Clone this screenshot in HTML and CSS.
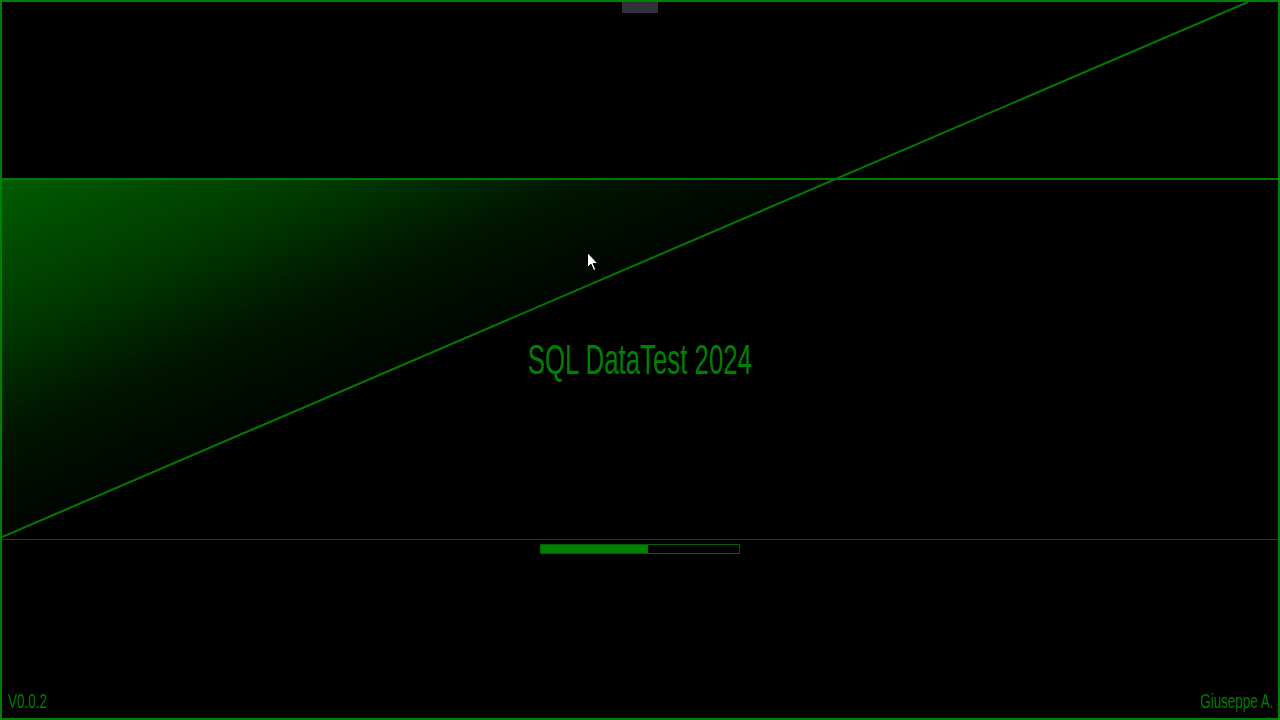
FILE: index.html
```html
<!DOCTYPE html>
<html lang="en">
<head>
<meta charset="utf-8">
<title>SQL DataTest 2024</title>
<link rel="stylesheet" href="styles.css">
</head>
<body>
<div class="screen">
  <div class="tab"></div>
  <svg class="overlay" width="1276" height="716" viewBox="0 0 1276 716" xmlns="http://www.w3.org/2000/svg">
    <defs>
      <linearGradient id="glow" x1="0" y1="0" x2="1" y2="1">
        <stop offset="0" stop-color="#005c00"/>
        <stop offset="0.2" stop-color="#003a00"/>
        <stop offset="0.36" stop-color="#001500"/>
        <stop offset="0.48" stop-color="#000700"/>
        <stop offset="0.56" stop-color="#000000"/>
      </linearGradient>
    </defs>
    <polygon points="0,178 831,178 0,535" fill="url(#glow)"/>
    <line x1="0" y1="535" x2="1246" y2="0" stroke="#007a00" stroke-width="2"/>
  </svg>
  <div class="top"></div>
  <div class="band">
    <h1 class="title"><span>SQL DataTest 2024</span></h1>
  </div>
  <div class="bottom">
    <div class="progress"><div class="fill" style="width:54%"></div></div>
    <div class="footer">
      <span class="ver">V0.0.2</span>
      <span class="author">Giuseppe A.</span>
    </div>
  </div>
  <svg class="cursor" width="13" height="21" viewBox="0 0 13 21" xmlns="http://www.w3.org/2000/svg">
    <path d="M0.5 0.5 L0.5 15.5 L4 12.2 L6.6 18.5 L8.8 17.6 L6.2 11.5 L10.8 11.5 Z" fill="#ffffff" stroke="#000000" stroke-width="1"/>
  </svg>
</div>
</body>
</html>
```
FILE: styles.css
```css
html, body {
  margin: 0;
  padding: 0;
  background: #000;
}
.screen {
  position: relative;
  width: 1280px;
  height: 720px;
  box-sizing: border-box;
  border: 2px solid #008000;
  background: #000;
  display: flex;
  flex-direction: column;
  overflow: hidden;
  font-family: "Liberation Sans Narrow", "Liberation Sans", Arial, sans-serif;
  color: #008000;
}
.tab {
  position: absolute;
  top: -2px;
  left: 620px;
  width: 36px;
  height: 13px;
  background: #2f323a;
  z-index: 3;
}
.overlay {
  position: absolute;
  left: 0;
  top: 0;
  z-index: 1;
  pointer-events: none;
}
.top {
  height: 176px;
  border-bottom: 2px solid #007a00;
  flex: none;
  position: relative;
  z-index: 2;
}
.band {
  height: 359px;
  flex: none;
  border-bottom: 1px solid #005400;
  display: flex;
  align-items: center;
  justify-content: center;
  position: relative;
  z-index: 2;
}
.title {
  margin: 0;
  font-weight: normal;
  font-size: 43px;
  line-height: 1;
  color: #008000;
  white-space: nowrap;
}
.title span {
  display: inline-block;
  transform: scaleX(0.6);
  transform-origin: center;
}
.bottom {
  flex: 1;
  display: flex;
  flex-direction: column;
  align-items: center;
  padding-top: 4px;
  position: relative;
  z-index: 2;
}
.progress {
  width: 198px;
  height: 8px;
  border: 1px solid #006000;
  background: #000;
}
.fill {
  height: 100%;
  background: #008000;
}
.footer {
  margin-top: auto;
  align-self: stretch;
  display: flex;
  justify-content: space-between;
  padding: 0 5px 6px 6px;
  font-size: 21px;
  line-height: 22px;
  color: #007a00;
}
.ver {
  display: inline-block;
  transform: scaleX(0.64);
  transform-origin: left;
}
.author {
  display: inline-block;
  transform: scaleX(0.64);
  transform-origin: right;
}
.cursor {
  position: absolute;
  left: 585px;
  top: 250px;
  z-index: 4;
}
```
